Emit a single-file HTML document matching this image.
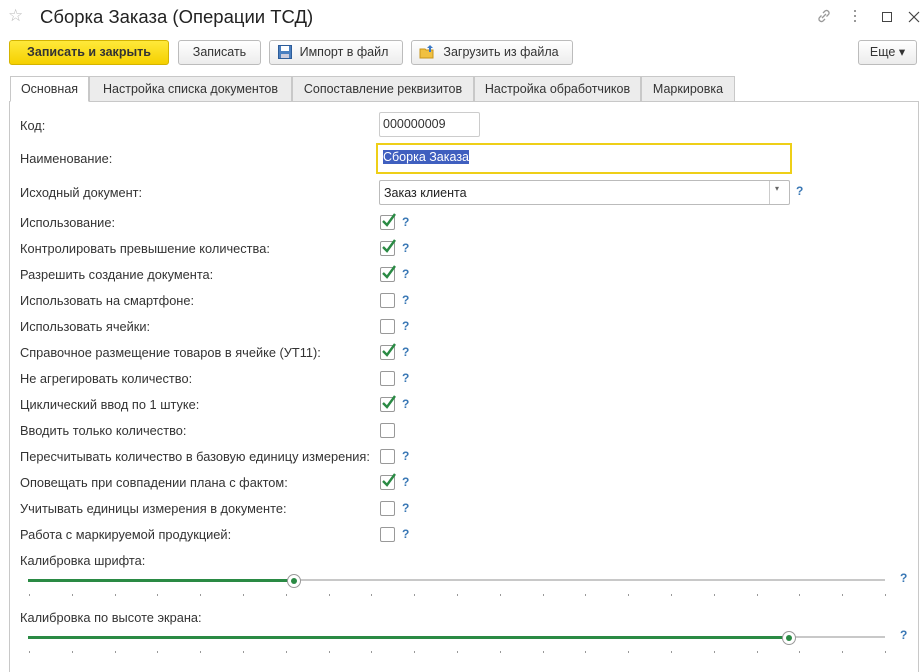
<!DOCTYPE html><html><head><meta charset="utf-8"><style>
*{box-sizing:border-box}html,body{margin:0;width:924px;height:672px;overflow:hidden}body{background:#fff;font-family:"Liberation Sans",Arial,sans-serif;font-size:12px;color:#333;position:relative}
.a{position:absolute;white-space:nowrap}
.btn{position:absolute;top:40px;height:25px;border:1px solid #bcbcbc;border-radius:3px;background:linear-gradient(#fff,#ececec);font-size:12.5px;line-height:23px;text-align:center;color:#333}
.tab{position:absolute;top:76px;height:26px;border:1px solid #c8c8c8;background:#ececec;line-height:24px;font-size:12.5px;text-align:center;color:#333}
.lbl{position:absolute;left:20px;font-size:12.8px;color:#333}
.cb{position:absolute;left:380px;width:15px;height:15px;border:1px solid #999;border-radius:2px;background:#fff}
.q{position:absolute;left:402px;color:#3a78b5;font-weight:bold;font-size:12px}
.tk{position:absolute;width:1px;height:2px;background:#999}
</style></head><body>
<div class="a" style="left:8px;top:6px;font-size:17px;color:#bbb">☆</div>
<div class="a" style="left:40px;top:6px;font-size:18.5px;color:#222">Сборка Заказа (Операции ТСД)</div>
<svg class="a" style="left:816px;top:8px" width="16" height="16" viewBox="0 0 16 16" fill="none" stroke="#999" stroke-width="1.3"><path d="M7 5l2-2a2.5 2.5 0 013.5 3.5l-2 2M9 11l-2 2a2.5 2.5 0 01-3.5-3.5l2-2M6 10l4-4"/></svg>
<div class="a" style="left:854px;top:10px;width:2px;height:12px;background:repeating-linear-gradient(#999 0 2px,transparent 2px 5px)"></div>
<div class="a" style="left:882px;top:12px;width:10px;height:10px;border:1.3px solid #444"></div>
<svg class="a" style="left:908px;top:11px" width="12" height="12"><path d="M1 1l10 10M11 1L1 11" stroke="#444" stroke-width="1.2"/></svg>
<div class="btn" style="left:9px;width:160px;background:linear-gradient(#ffe93a,#f5d000);border-color:#d4b400;font-weight:bold;color:#333">Записать и закрыть</div>
<div class="btn" style="left:178px;width:83px">Записать</div>
<div class="btn" style="left:269px;width:134px;padding-left:16px">Импорт в файл</div>
<svg class="a" style="left:278px;top:45px" width="14" height="14"><rect x="0.5" y="0.5" width="13" height="13" fill="#4a7fc0" stroke="#2d5c99"/><rect x="3" y="1" width="8" height="5" fill="#fff"/><rect x="3" y="9" width="8" height="4" fill="#ccd"/></svg>
<div class="btn" style="left:411px;width:162px;padding-left:18px">Загрузить из файла</div>
<svg class="a" style="left:419px;top:44px" width="17" height="15"><path d="M1 5h5l1 1h7v8H1z" fill="#f0c040" stroke="#c8951a"/><path d="M11 1l3 3h-2v4h-2V4H8z" fill="#3a78c5"/></svg>
<div class="btn" style="left:858px;width:59px">Еще ▾</div>
<div class="a" style="left:9px;top:101px;width:910px;height:571px;border:1px solid #c8c8c8;border-bottom:none"></div>
<div class="tab" style="left:10px;width:79px;background:#fff;border-bottom-color:#fff">Основная</div>
<div class="tab" style="left:89px;width:203px">Настройка списка документов</div>
<div class="tab" style="left:292px;width:182px">Сопоставление реквизитов</div>
<div class="tab" style="left:474px;width:167px">Настройка обработчиков</div>
<div class="tab" style="left:641px;width:94px">Маркировка</div>
<div class="lbl" style="top:118px">Код:</div>
<div class="a" style="left:379px;top:112px;width:101px;height:25px;border:1px solid #ccc;border-radius:2px;padding:4px 3px;font-size:12.5px">000000009</div>
<div class="lbl" style="top:151px">Наименование:</div>
<div class="a" style="left:376px;top:143px;width:416px;height:31px;border:2px solid #eecf18;padding:5px 5px"><span style="background:#3f5fbf;color:#fff;font-size:12.5px">Сборка Заказа</span></div>
<div class="lbl" style="top:185px">Исходный документ:</div>
<div class="a" style="left:379px;top:180px;width:411px;height:25px;border:1px solid #bbb;border-radius:2px;padding:5px 4px;font-size:12.5px;color:#222">Заказ клиента</div>
<div class="a" style="left:769px;top:181px;width:1px;height:23px;background:#ccc"></div>
<div class="a" style="left:775px;top:184px;font-size:8px;color:#666">▾</div>
<div class="q" style="left:796px;top:184px">?</div>
<div id="rows"></div>
<div class="lbl" style="top:553px">Калибровка шрифта:</div>
<div class="a" style="left:28px;top:579px;width:857px;height:2px;background:#c8c8c8"></div>
<div class="a" style="left:28px;top:579px;width:266px;height:3px;background:#2a8a44"></div>
<div class="a" style="left:287px;top:574px;width:14px;height:14px;border:1px solid #999;border-radius:50%;background:#fff"><div style="margin:3px;width:6px;height:6px;border-radius:50%;background:#2a8a44"></div></div>
<div class="q" style="left:900px;top:571px">?</div>
<div class="lbl" style="top:610px">Калибровка по высоте экрана:</div>
<div class="a" style="left:28px;top:636px;width:857px;height:2px;background:#c8c8c8"></div>
<div class="a" style="left:28px;top:636px;width:761px;height:3px;background:#2a8a44"></div>
<div class="a" style="left:782px;top:631px;width:14px;height:14px;border:1px solid #999;border-radius:50%;background:#fff"><div style="margin:3px;width:6px;height:6px;border-radius:50%;background:#2a8a44"></div></div>
<div class="q" style="left:900px;top:628px">?</div>
<script>
var r=[["Использование:",1,1],["Контролировать превышение количества:",1,1],["Разрешить создание документа:",1,1],["Использовать на смартфоне:",0,1],["Использовать ячейки:",0,1],["Справочное размещение товаров в ячейке (УТ11):",1,1],["Не агрегировать количество:",0,1],["Циклический ввод по 1 штуке:",1,1],["Вводить только количество:",0,0],["Пересчитывать количество в базовую единицу измерения:",0,1],["Оповещать при совпадении плана с фактом:",1,1],["Учитывать единицы измерения в документе:",0,1],["Работа с маркируемой продукцией:",0,1]];
var h="";r.forEach(function(x,i){var y=222+i*26;h+='<div class="lbl" style="top:'+(y-7)+'px">'+x[0]+'</div><div class="cb" style="top:'+(y-7)+'px">'+(x[1]?'<svg width="15" height="15" style="position:absolute;left:0;top:-3px"><path d="M2 8l4 4 8-11" fill="none" stroke="#2a8a44" stroke-width="2.4"/></svg>':'')+'</div>'+(x[2]?'<div class="q" style="top:'+(y-7)+'px">?</div>':'');});
for(var k=0;k<21;k++){var xx=29+k*42.8;h+='<div class="tk" style="left:'+xx+'px;top:594px"></div><div class="tk" style="left:'+xx+'px;top:651px"></div>';}
document.getElementById("rows").innerHTML=h;
</script>
</body></html>
